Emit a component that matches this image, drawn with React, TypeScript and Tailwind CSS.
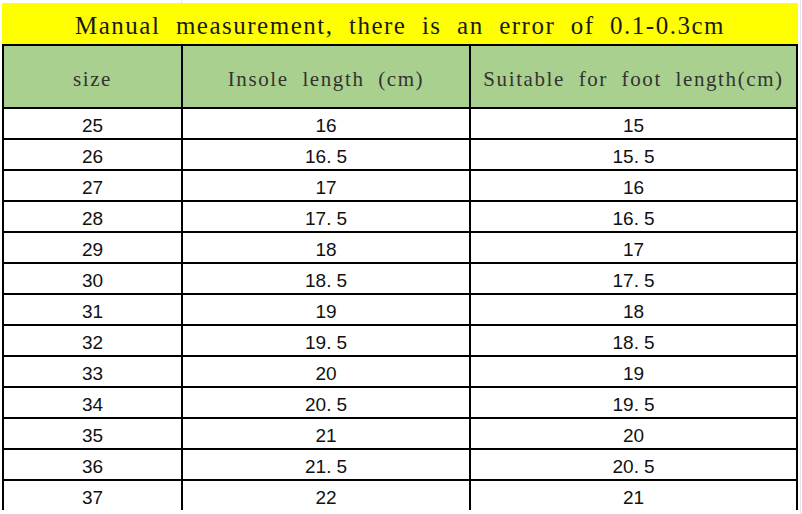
const rows: [string, string, string][] = [
  ["25", "16", "15"],
  ["26", "16.5", "15.5"],
  ["27", "17", "16"],
  ["28", "17.5", "16.5"],
  ["29", "18", "17"],
  ["30", "18.5", "17.5"],
  ["31", "19", "18"],
  ["32", "19.5", "18.5"],
  ["33", "20", "19"],
  ["34", "20.5", "19.5"],
  ["35", "21", "20"],
  ["36", "21.5", "20.5"],
  ["37", "22", "21"],
];

const serif = "font-['Liberation_Serif','Noto_Sans_CJK_SC',serif]";
const sans = "font-['Liberation_Sans','Noto_Sans_CJK_SC',sans-serif]";

function Num({ value }: { value: string }) {
  const [a, b] = value.split(".");
  if (b === undefined) return <>{a}</>;
  return (
    <>
      {a}
      <span className="mr-[5px]">.</span>
      {b}
    </>
  );
}

function Head({ children }: { children: React.ReactNode }) {
  return (
    <div
      className={`flex h-[61px] items-center justify-center whitespace-pre bg-[#a9d08e] pt-[6px] text-[21px] tracking-[1.6px] text-[#333] ${serif}`}
    >
      {children}
    </div>
  );
}

export default function App() {
  return (
    <div className="relative h-[514px] w-[802px] overflow-hidden bg-white">
      <div className="pointer-events-none absolute left-[181px] top-0 h-[3px] w-px bg-gray-200" />
      <div className="pointer-events-none absolute left-[800px] top-0 h-full w-px bg-gray-200" />
      <div className="ml-[2px] mt-[3px] w-[796px]">
        <div
          className={`flex h-[41px] items-center justify-center whitespace-pre bg-[#ffff00] pt-[4px] text-[25px] tracking-[1.5px] text-[#1a1a1a] ${serif}`}
        >
          {"Manual  measurement,  there  is  an  error  of  0.1-0.3cm"}
        </div>
        <div className="grid grid-cols-[177px_286px_325px] gap-[2px] bg-black p-[2px] pb-0">
          <Head>size</Head>
          <Head>{"Insole  length  (cm)"}</Head>
          <Head>{"Suitable  for  foot  length(cm)"}</Head>
          {rows.map((r) =>
            r.map((c, i) => (
              <div
                key={r[0] + "-" + i}
                className={`flex h-[29px] items-center justify-center bg-white pt-[5px] text-[19px] text-[#111] ${sans}`}
              >
                <Num value={c} />
              </div>
            ))
          )}
        </div>
      </div>
    </div>
  );
}
